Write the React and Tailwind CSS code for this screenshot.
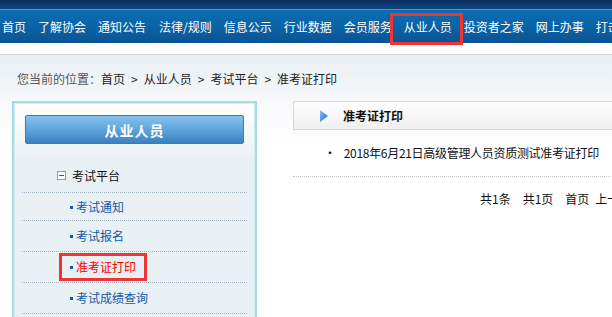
import React from "react";

const font = { fontFamily: '"Noto Sans CJK SC", "Liberation Sans", sans-serif' };

const navItems = ["首页", "了解协会", "通知公告", "法律/规则", "信息公示", "行业数据", "会员服务", "从业人员", "投资者之家", "网上办事", "打击非法"];

function Bullet() {
  return <span className="inline-block w-[3px] h-[3px] bg-[#1559a8] mr-[3px] mt-[1px]" />;
}

function Sep() {
  return <div className="mx-[7px] h-0 border-t border-dotted border-[#9fb3c2]" />;
}

function Gt() {
  return <span className="mx-[6px]">&gt;</span>;
}

export default function App() {
  return (
    <div className="w-[612px] h-[317px] overflow-hidden bg-white text-[12px] leading-none" style={font}>
      {/* header */}
      <div className="h-[9px] bg-gradient-to-b from-[#0a2c5c] to-[#104684]" />
      <div className="h-[1px] bg-[#5c8cc0]" />
      <nav className="h-[33px] bg-gradient-to-b from-[#0b6db2] via-[#0a63a7] to-[#0a5394] flex items-center pl-[2px] gap-[12px] text-white whitespace-nowrap">
        {navItems.map((t) => (
          <div key={t} className={"relative flex items-center h-full" + (t === "法律/规则" ? " ml-[1px]" : "")}>
            {t === "从业人员" ? (
              <>
                <span>{t}</span>
                <div className="absolute left-[-14px] right-[-11px] top-[3px] h-[32px] border-[3px] border-[#ee3434]" />
              </>
            ) : (
              <span>{t}</span>
            )}
          </div>
        ))}
      </nav>
      <div className="h-[11px] bg-white" />
      <div className="h-[1px] bg-[#d4d4d4]" />

      {/* main */}
      <div className="bg-gradient-to-b from-[#e8eef3] via-[#f6f8fa] to-white bg-[length:100%_90px] bg-no-repeat">
        <div className="h-[46px] flex items-center pl-[17px] pt-[1px] whitespace-nowrap">
          <span className="text-[#555]">您当前的位置：</span>
          <span className="text-[#222]">
            首页<Gt />从业人员<Gt />考试平台<Gt />准考证打印
          </span>
        </div>

        <div className="flex">
          {/* left panel */}
          <div className="ml-[12px] w-[245px] h-[230px] border-2 border-[#a7dbe5] shrink-0">
            <div className="h-full border border-[#d2eef3] bg-gradient-to-b from-white to-[#e8f0f4] bg-[length:100%_60px] bg-no-repeat bg-[#e8f0f4]">
              <div className="pt-[11px] px-[10px]">
                <div className="h-[29px] rounded-[2px] border border-[#3a7db4] bg-gradient-to-b from-[#86c2ee] via-[#5fa5dc] to-[#3a80c0] flex items-center justify-center text-white text-[14px] font-bold tracking-[1px]">
                  从业人员
                </div>
              </div>
              <div className="mt-[15px] h-[33px] flex items-center pl-[42px] text-[#111]">
                <span className="w-[9px] h-[9px] border border-[#999] bg-white flex items-center justify-center mr-[6px]">
                  <span className="w-[5px] h-[1px] bg-[#555]" />
                </span>
                考试平台
              </div>
              <Sep />
              <div className="h-[27px] flex items-center pl-[55px] text-[#1559a8]">
                <Bullet />考试通知
              </div>
              <Sep />
              <div className="h-[30px] flex items-center pl-[55px] text-[#1559a8]">
                <Bullet />考试报名
              </div>
              <Sep />
              <div className="relative h-[30px] flex items-center pl-[55px] text-[#f00]">
                <Bullet />准考证打印
                <div className="absolute left-[44px] w-[88px] top-[1px] h-[28px] border-[3px] border-[#ee3434]" />
              </div>
              <Sep />
              <div className="h-[30px] flex items-center pl-[55px] text-[#1559a8]">
                <Bullet />考试成绩查询
              </div>
              <Sep />
            </div>
          </div>

          {/* right panel */}
          <div className="ml-[36px] flex-1">
            <div className="h-[29px] border border-[#d6d6d6] border-r-0 bg-gradient-to-b from-white to-[#efefef] flex items-center pl-[26px]">
              <svg width="8" height="12" viewBox="0 0 8 12" className="mr-[15px]">
                <defs>
                  <linearGradient id="tri" x1="0" y1="0" x2="1" y2="1">
                    <stop offset="0" stopColor="#8fc3f0" />
                    <stop offset="1" stopColor="#1f64c4" />
                  </linearGradient>
                </defs>
                <polygon points="0,0 8,6 0,12" fill="url(#tri)" />
              </svg>
              <span className="font-bold text-[#111]">准考证打印</span>
            </div>
            <div className="h-[46px] flex items-center pl-[31px] text-[#111] whitespace-nowrap tracking-[-0.3px]">
              <span className="mr-[8px]">·</span>
              2018年6月21日高级管理人员资质测试准考证打印
            </div>
            <div className="h-0 border-t border-dotted border-[#c8c8c8]" />
            <div className="h-[43px] flex items-center pl-[187px] text-[#111] whitespace-nowrap">
              <span>共1条</span>
              <span className="ml-[12px]">共1页</span>
              <span className="ml-[12px]">首页</span>
              <span className="ml-[6px]">上一页</span>
            </div>
          </div>
        </div>
      </div>
    </div>
  );
}
